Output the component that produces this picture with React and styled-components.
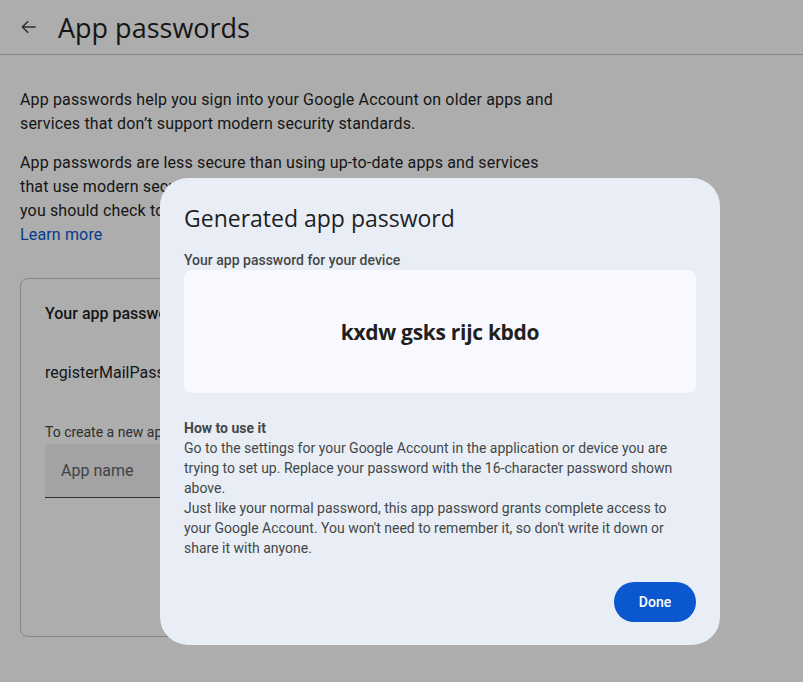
import React from 'react';
import styled, { createGlobalStyle } from 'styled-components';

const GlobalStyle = createGlobalStyle`
  html, body { margin: 0; padding: 0; }
  body {
    background: #ffffff;
    font-family: Roboto, "Liberation Sans", sans-serif;
    color: #1f1f1f;
    overflow: hidden;
  }
`;

const Page = styled.div`
  position: relative;
  width: 803px;
  height: 682px;
  overflow: hidden;
  background: #fff;
`;

const Header = styled.div`
  display: flex;
  align-items: center;
  height: 55px;
  padding-left: 17px;
  border-bottom: 1px solid #c4c7c5;
  box-sizing: border-box;
`;

const BackButton = styled.div`
  width: 24px;
  height: 24px;
  display: flex;
  align-items: center;
  justify-content: center;
  margin-right: 17px;
  color: #444746;
`;

const Title = styled.h1`
  margin: 0;
  font-family: "Open Sans", Roboto, sans-serif;
  font-weight: 400;
  font-size: 27px;
  color: #1f1f1f;
`;

const Content = styled.div`
  padding: 33px 20px 0 20px;
  width: 540px;
`;

const Para = styled.p`
  margin: 0 0 15px 0;
  font-size: 16px;
  line-height: 24px;
  letter-spacing: 0.15px;
  color: #1f1f1f;
`;

const LearnMore = styled.a`
  color: #0b57d0;
  text-decoration: none;
  display: block;
`;

const CardWrap = styled.div`
  padding-left: 20px;
`;

const Card = styled.div`
  margin-top: 31px;
  width: 580px;
  height: 359px;
  border: 1px solid #c4c7c5;
  border-radius: 8px;
  box-sizing: border-box;
  padding: 24px 24px;
`;

const CardTitle = styled.div`
  font-size: 16px;
  font-weight: 500;
  line-height: 22px;
`;

const AppRow = styled.div`
  margin-top: 37px;
  font-size: 16px;
  line-height: 22px;
`;

const Hint = styled.div`
  margin-top: 39px;
  font-size: 14px;
  line-height: 18px;
  color: #444746;
`;

const Field = styled.div`
  margin-top: 3px;
  width: 400px;
  height: 54px;
  background: #f0f0f0;
  border-bottom: 1px solid #444746;
  border-radius: 4px 4px 0 0;
  box-sizing: border-box;
  padding-left: 16px;
  display: flex;
  align-items: center;
  font-size: 16px;
  color: #5f6368;
`;

const Scrim = styled.div`
  position: absolute;
  inset: 0;
  background: rgba(0, 0, 0, 0.32);
`;

const Dialog = styled.div`
  position: absolute;
  left: 160px;
  top: 178px;
  width: 560px;
  height: 467px;
  background: #e9eef6;
  border-radius: 28px;
  box-sizing: border-box;
  padding: 24px 24px 23px 24px;
  display: flex;
  flex-direction: column;
`;

const DialogTitle = styled.h2`
  margin: 0;
  font-family: "Open Sans", Roboto, sans-serif;
  font-weight: 400;
  font-size: 23px;
  line-height: 32px;
  color: #1f1f1f;
`;

const Label = styled.div`
  margin-top: 17px;
  font-size: 14px;
  font-weight: 500;
  line-height: 18px;
  color: #444746;
`;

const PasswordBox = styled.div`
  margin-top: 1px;
  height: 123px;
  background: #f8f9fe;
  border-radius: 8px;
  display: flex;
  align-items: center;
  justify-content: center;
  font-family: "Open Sans", Roboto, sans-serif;
  font-size: 21px;
  font-weight: 700;
  letter-spacing: -0.3px;
  color: #1f1f1f;
`;

const HowTitle = styled.div`
  margin-top: 25px;
  font-size: 14px;
  font-weight: 700;
  line-height: 20px;
  color: #444746;
`;

const HowText = styled.div`
  font-size: 14px;
  line-height: 20px;
  color: #444746;
`;

const Actions = styled.div`
  margin-top: auto;
  display: flex;
  justify-content: flex-end;
`;

const DoneButton = styled.button`
  width: 82px;
  height: 40px;
  border: none;
  border-radius: 20px;
  background: #0b57d0;
  color: #fff;
  font-family: Roboto, sans-serif;
  font-size: 14px;
  font-weight: 500;
  cursor: pointer;
`;

export default function App() {
  return (
    <Page>
      <GlobalStyle />
      <Header>
        <BackButton>
          <svg width="20" height="20" viewBox="0 0 24 24" fill="none" stroke="currentColor" strokeWidth="1.8">
            <path d="M20 12H5M11 5l-7 7 7 7" />
          </svg>
        </BackButton>
        <Title>App passwords</Title>
      </Header>
      <Content>
        <Para>
          App passwords help you sign into your Google Account on older apps and services that
          don’t support modern security standards.
        </Para>
        <Para>
          App passwords are less secure than using up-to-date apps and services that use modern
          security standards. Before you create an app password, you should check to see if your
          app needs this in order to sign in.
          <LearnMore href="#">Learn more</LearnMore>
        </Para>
      </Content>
      <CardWrap>
        <Card>
          <CardTitle>Your app passwords</CardTitle>
          <AppRow>registerMailPassword</AppRow>
          <Hint>To create a new app specific password, type a name for it below...</Hint>
          <Field>App name</Field>
        </Card>
      </CardWrap>
      <Scrim />
      <Dialog>
        <DialogTitle>Generated app password</DialogTitle>
        <Label>Your app password for your device</Label>
        <PasswordBox>kxdw gsks rijc kbdo</PasswordBox>
        <HowTitle>How to use it</HowTitle>
        <HowText>
          Go to the settings for your Google Account in the application or device you are trying
          to set up. Replace your password with the 16-character password shown above.
          <br />
          Just like your normal password, this app password grants complete access to your Google
          Account. You won't need to remember it, so don't write it down or share it with anyone.
        </HowText>
        <Actions>
          <DoneButton>Done</DoneButton>
        </Actions>
      </Dialog>
    </Page>
  );
}
